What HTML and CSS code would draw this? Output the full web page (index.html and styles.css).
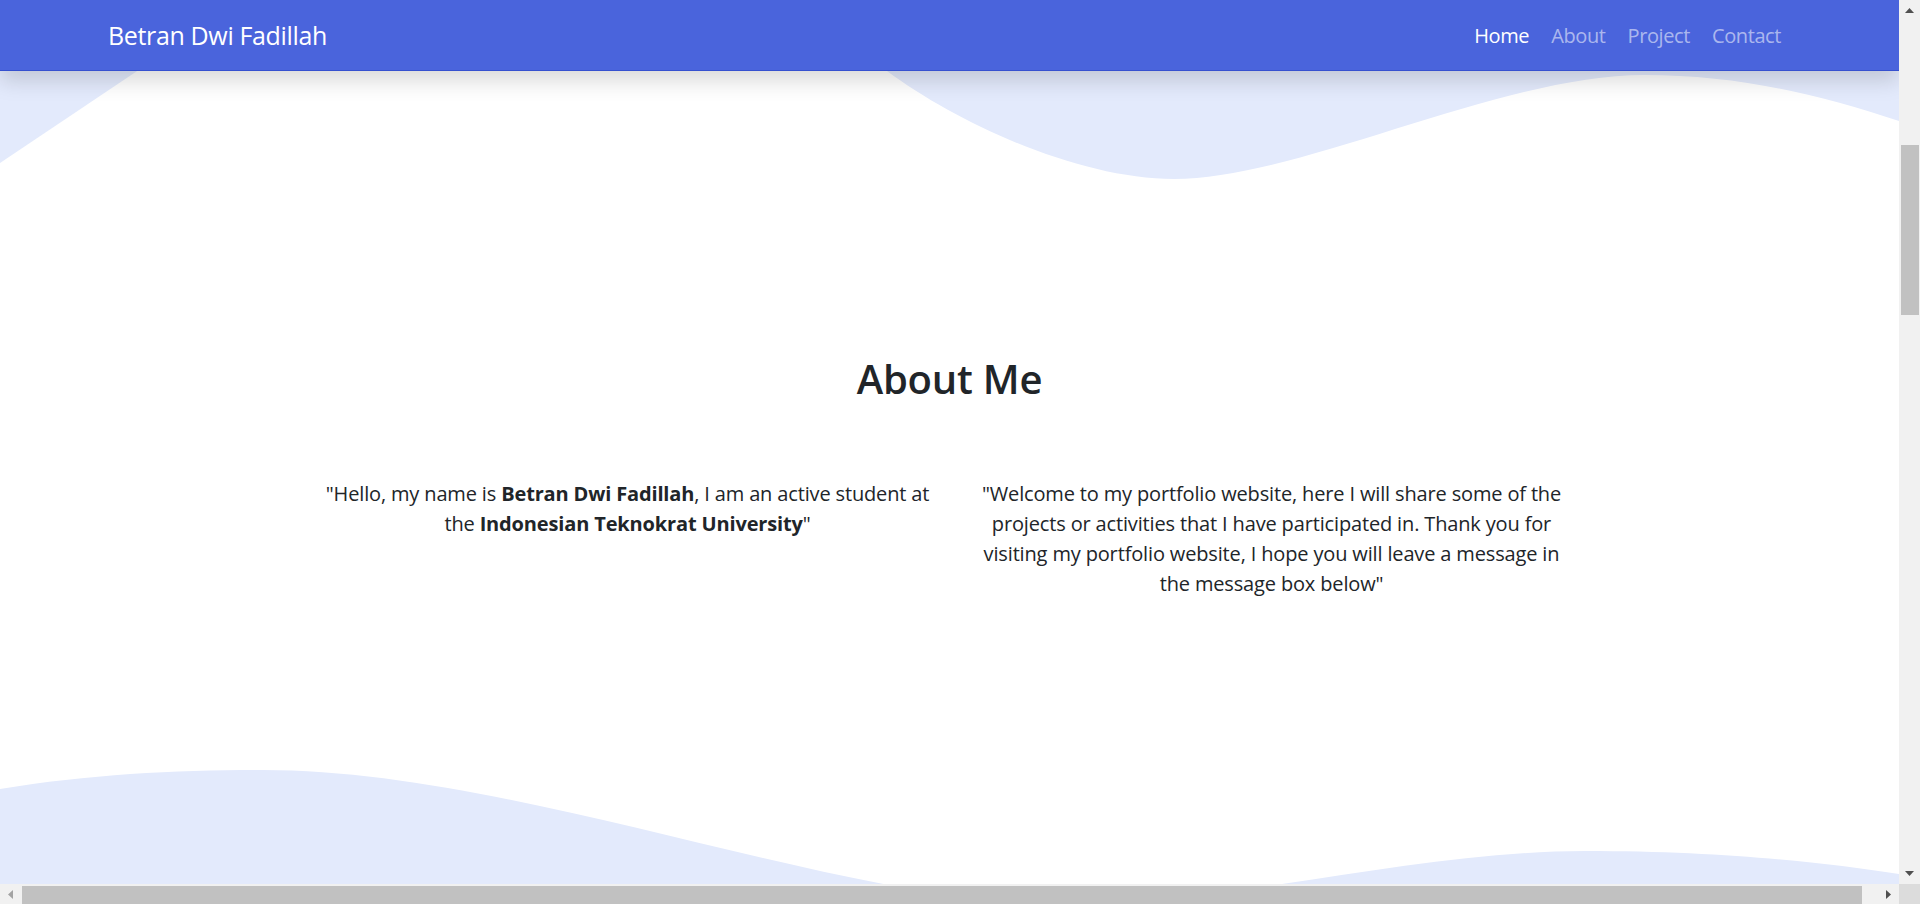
FILE: index.html
```html
<!DOCTYPE html>
<html lang="en">
<head>
<meta charset="utf-8">
<title>Betran Dwi Fadillah</title>
<link rel="stylesheet" href="styles.css">
</head>
<body>
<div class="window">
  <div class="page">
    <svg class="wave wave-top" viewBox="0 0 1899 200" width="1899" height="200" aria-hidden="true">
      <path d="M0,0 V163 L243,0 Z"/>
      <path d="M880,60 L887,71 C960,125 1080,179 1174,179 C1300,179 1500,75 1644,75 C1740,75 1820,95 1899,121 L1899,60 Z"/>
    </svg>
    <svg class="wave wave-bottom" viewBox="0 740 1899 144" width="1899" height="144" aria-hidden="true">
      <path d="M0,789 C90,774 180,770 263,770 C520,770 840,905 1070,905 C1220,905 1420,851 1585,851 C1720,851 1820,862 1899,874 L1899,884 L0,884 Z"/>
    </svg>

    <nav class="navbar">
      <a class="brand" href="#">Betran Dwi Fadillah</a>
      <ul class="nav">
        <li><a class="nav-link active" href="#">Home</a></li>
        <li><a class="nav-link" href="#">About</a></li>
        <li><a class="nav-link" href="#">Project</a></li>
        <li><a class="nav-link" href="#">Contact</a></li>
      </ul>
    </nav>

    <section class="about">
      <h2 class="about-title">About Me</h2>
      <div class="about-row">
        <div class="about-col">
          <p>"Hello, my name is <b>Betran Dwi Fadillah</b>, I am an active student at the <b>Indonesian Teknokrat University</b>"</p>
        </div>
        <div class="about-col">
          <p>"Welcome to my portfolio website, here I will share some of the projects or activities that I have participated in. Thank you for visiting my portfolio website, I hope you will leave a message in the message box below"</p>
        </div>
      </div>
    </section>
  </div>

  <div class="vscroll">
    <div class="sb-btn">
      <svg width="9" height="5" viewBox="0 0 9 5"><path d="M0,5 L4.5,0 L9,5 Z"/></svg>
    </div>
    <div class="vtrack"><div class="vthumb"></div></div>
    <div class="sb-btn">
      <svg width="9" height="5" viewBox="0 0 9 5"><path d="M0,0 L9,0 L4.5,5 Z"/></svg>
    </div>
  </div>

  <div class="hscroll">
    <div class="sb-btn sb-btn-h disabled">
      <svg width="5" height="9" viewBox="0 0 5 9"><path d="M5,0 L5,9 L0,4.5 Z"/></svg>
    </div>
    <div class="htrack"><div class="hthumb"></div></div>
    <div class="sb-btn sb-btn-h">
      <svg width="5" height="9" viewBox="0 0 5 9"><path d="M0,0 L5,4.5 L0,9 Z"/></svg>
    </div>
  </div>
  <div class="corner"></div>
</div>
</body>
</html>
```

FILE: styles.css
```css
* { box-sizing: border-box; }

html, body {
  margin: 0;
  padding: 0;
  width: 1920px;
  height: 904px;
  overflow: hidden;
  background: #ffffff;
}

body {
  font-family: "Open Sans", "Noto Sans", "Liberation Sans", sans-serif;
  color: #212529;
}

.window {
  display: grid;
  grid-template-columns: 1899px 21px;
  grid-template-rows: 884px 20px;
  width: 1920px;
  height: 904px;
}

.page {
  position: relative;
  overflow: hidden;
  background: #ffffff;
}

.wave {
  position: absolute;
  left: 0;
  fill: #e3eafc;
  z-index: 0;
}
.wave-top { top: 0; }
.wave-bottom { bottom: 0; }

/* Navbar */
.navbar {
  position: relative;
  z-index: 2;
  height: 71px;
  display: flex;
  align-items: center;
  justify-content: space-between;
  padding: 2px 107px 0 108px;
  background: #4a64dc;
  border-bottom: 1px solid #3550cf;
  box-shadow: 0 10px 20px rgba(0, 0, 0, 0.15);
}

.brand {
  color: #ffffff;
  text-decoration: none;
  font-size: 25px;
  line-height: 30px;
  letter-spacing: -0.35px;
  margin-top: -2px;
}

.nav {
  display: flex;
  list-style: none;
  margin: 0;
  padding: 0;
}

.nav-link {
  display: block;
  padding: 0 11px;
  font-size: 20px;
  line-height: 30px;
  letter-spacing: -0.4px;
  color: rgba(255, 255, 255, 0.55);
  text-decoration: none;
}
.nav-link.active { color: #ffffff; }

/* About */
.about {
  position: relative;
  z-index: 1;
  padding-top: 284px;
  text-align: center;
}

.about-title {
  margin: 0;
  font-size: 40px;
  line-height: 48px;
  font-weight: 600;
  letter-spacing: -0.2px;
}

.about-row {
  display: flex;
  justify-content: center;
  margin-top: 76px;
}

.about-col {
  width: 644px;
  padding: 0 19px;
}

.about-col p {
  margin: 0;
  font-size: 20px;
  line-height: 30px;
  letter-spacing: -0.15px;
}

.about-col b { font-weight: 700; }

/* Fake browser scrollbars */
.vscroll {
  display: flex;
  flex-direction: column;
  background: #f1f1f1;
}

.sb-btn {
  flex: 0 0 21px;
  height: 21px;
  display: flex;
  align-items: center;
  justify-content: center;
  fill: #505050;
}
.sb-btn-h { flex: 0 0 21px; width: 21px; height: 20px; }
.sb-btn.disabled { fill: #a3a3a3; }

.vtrack {
  flex: 1;
  padding: 124px 1px 0 2px;
}
.vthumb {
  height: 170px;
  background: #c1c1c1;
}

.hscroll {
  display: flex;
  background: #f1f1f1;
}
.htrack {
  flex: 1;
  padding: 2px 0 0 1px;
}
.hthumb {
  width: 1840px;
  height: 100%;
  background: #c1c1c1;
}

.corner { background: #dcdcdc; }
```
